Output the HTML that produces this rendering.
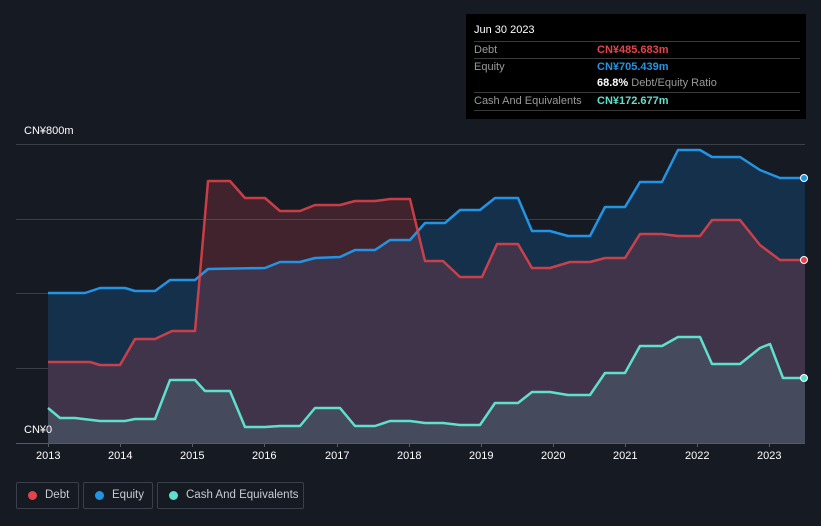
<!DOCTYPE html>
<html><head><meta charset="utf-8"><style>
body{margin:0;background:#151a23;font-family:"Liberation Sans","Noto Sans CJK SC",sans-serif;}
.wrap{position:relative;width:821px;height:526px;overflow:hidden;background:#151a23}
.tip{position:absolute;left:466px;top:14px;width:340px;height:105px;background:#000;color:#fff;font-size:11px}
.tip .r{position:absolute;left:8px;width:326px;border-top:1px solid #3a3a3a;height:17px}
.tip .l{position:absolute;left:0;top:2px;color:#9a9a9a}
.tip .v{position:absolute;left:123px;top:2px;font-weight:bold}
.leg{position:absolute;top:482px;height:27px;border:1px solid #3a4049;border-radius:2px;color:#c8ccd2;font-size:11.5px;box-sizing:border-box;line-height:25px;white-space:nowrap}
.dot{position:absolute;top:8px;width:9px;height:9px;border-radius:50%}
.ax{position:absolute;color:#fff;font-size:11px}
</style></head><body><div class="wrap">
<svg width="821" height="526" style="position:absolute;left:0;top:0">
<g stroke="#3a3f48" stroke-width="1">
<line x1="16" y1="144.5" x2="805" y2="144.5"/><line x1="16" y1="219.5" x2="805" y2="219.5"/><line x1="16" y1="293.5" x2="805" y2="293.5"/><line x1="16" y1="368.5" x2="805" y2="368.5"/><line x1="16" y1="443.5" x2="805" y2="443.5" stroke="#555b63"/>
</g>
<polygon fill="#14304a" points="48,293 85,293 100,288 125,288 135,291 155,291 170,280 195,280 208,269 265,268 280,262 300,262 315,258 340,257 355,250 375,250 390,240 410,240 425,223 445,223 460,210 480,210 495,198 518,198 532,231 550,231 568,236 590,236 605,207 625,207 640,182 662,182 678,150 700,150 712,157 740,157 760,170 780,178 805,178 805,443 48,443"/>
<polygon fill="rgba(225,70,80,0.22)" points="48,362 90,362 100,365 120,365 135,339 155,339 172,331 195,331 208,181 230,181 245,198 265,198 280,211 300,211 315,205 340,205 355,201 375,201 390,199 410,199 425,261 443,261 460,277 482,277 497,244 518,244 532,268 550,268 570,262 590,262 605,258 625,258 640,234 662,234 678,236 700,236 712,220 740,220 760,245 780,260 805,260 805,443 48,443"/>
<polygon fill="rgba(100,210,200,0.14)" points="48,408 60,418 75,418 100,421 125,421 135,419 155,419 170,380 195,380 205,391 230,391 245,427 265,427 280,426 300,426 315,408 340,408 355,426 375,426 390,421 410,421 425,423 443,423 460,425 480,425 495,403 518,403 532,392 550,392 568,395 590,395 605,373 625,373 640,346 662,346 678,337 700,337 712,364 740,364 760,348 770,344 783,378 805,378 805,443 48,443"/>
<g fill="none" stroke-width="2.5" stroke-linejoin="round">
<polyline stroke="#2394e4" points="48,293 85,293 100,288 125,288 135,291 155,291 170,280 195,280 208,269 265,268 280,262 300,262 315,258 340,257 355,250 375,250 390,240 410,240 425,223 445,223 460,210 480,210 495,198 518,198 532,231 550,231 568,236 590,236 605,207 625,207 640,182 662,182 678,150 700,150 712,157 740,157 760,170 780,178 805,178"/>
<polyline stroke="#e5434b" points="48,362 90,362 100,365 120,365 135,339 155,339 172,331 195,331 208,181 230,181 245,198 265,198 280,211 300,211 315,205 340,205 355,201 375,201 390,199 410,199 425,261 443,261 460,277 482,277 497,244 518,244 532,268 550,268 570,262 590,262 605,258 625,258 640,234 662,234 678,236 700,236 712,220 740,220 760,245 780,260 805,260" stroke-opacity="0.85"/>
<polyline stroke="#5fe0cc" points="48,408 60,418 75,418 100,421 125,421 135,419 155,419 170,380 195,380 205,391 230,391 245,427 265,427 280,426 300,426 315,408 340,408 355,426 375,426 390,421 410,421 425,423 443,423 460,425 480,425 495,403 518,403 532,392 550,392 568,395 590,395 605,373 625,373 640,346 662,346 678,337 700,337 712,364 740,364 760,348 770,344 783,378 805,378"/>
</g>
<circle cx="804" cy="178" r="3.5" fill="#2394e4" stroke="#fff" stroke-width="1"/>
<circle cx="804" cy="260" r="3.5" fill="#e5434b" stroke="#fff" stroke-width="1"/>
<circle cx="804" cy="378" r="3.5" fill="#5fe0cc" stroke="#fff" stroke-width="1"/>
<g stroke="#555b63"><line x1="48.5" y1="443" x2="48.5" y2="447"/><line x1="120.5" y1="443" x2="120.5" y2="447"/><line x1="192.5" y1="443" x2="192.5" y2="447"/><line x1="264.5" y1="443" x2="264.5" y2="447"/><line x1="337.5" y1="443" x2="337.5" y2="447"/><line x1="409.5" y1="443" x2="409.5" y2="447"/><line x1="481.5" y1="443" x2="481.5" y2="447"/><line x1="553.5" y1="443" x2="553.5" y2="447"/><line x1="625.5" y1="443" x2="625.5" y2="447"/><line x1="697.5" y1="443" x2="697.5" y2="447"/><line x1="769.5" y1="443" x2="769.5" y2="447"/></g>
</svg>
<div class="ax" style="left:24px;top:125px">CN¥800m</div>
<div class="ax" style="left:24px;top:424px">CN¥0</div>
<div class="ax" style="left:36px;top:450px">2013</div>
<div class="ax" style="left:108px;top:450px">2014</div>
<div class="ax" style="left:180px;top:450px">2015</div>
<div class="ax" style="left:252px;top:450px">2016</div>
<div class="ax" style="left:325px;top:450px">2017</div>
<div class="ax" style="left:397px;top:450px">2018</div>
<div class="ax" style="left:469px;top:450px">2019</div>
<div class="ax" style="left:541px;top:450px">2020</div>
<div class="ax" style="left:613px;top:450px">2021</div>
<div class="ax" style="left:685px;top:450px">2022</div>
<div class="ax" style="left:757px;top:450px">2023</div>
<div class="tip">
<div style="position:absolute;left:8px;top:10px;font-size:11px">Jun 30 2023</div>
<div class="r" style="top:27px"><span class="l">Debt</span><span class="v" style="color:#e5434b">CN¥485.683m</span></div>
<div class="r" style="top:44px"><span class="l">Equity</span><span class="v" style="color:#2394e4">CN¥705.439m</span></div>
<div class="r" style="top:61px;border-top:none"><span class="v" style="color:#fff">68.8% <span style="color:#9a9a9a;font-weight:normal">Debt/Equity Ratio</span></span></div>
<div class="r" style="top:78px"><span class="l">Cash And Equivalents</span><span class="v" style="color:#5fe0cc">CN¥172.677m</span></div>
<div class="r" style="top:96px;height:0"></div>
</div>
<div class="leg" style="left:16px;width:63px"><span class="dot" style="left:11px;background:#e5434b"></span><span style="position:absolute;left:28px">Debt</span></div>
<div class="leg" style="left:83px;width:70px"><span class="dot" style="left:11px;background:#2394e4"></span><span style="position:absolute;left:28px">Equity</span></div>
<div class="leg" style="left:157px;width:147px"><span class="dot" style="left:11px;background:#5fe0cc"></span><span style="position:absolute;left:28px">Cash And Equivalents</span></div>
</div></body></html>
